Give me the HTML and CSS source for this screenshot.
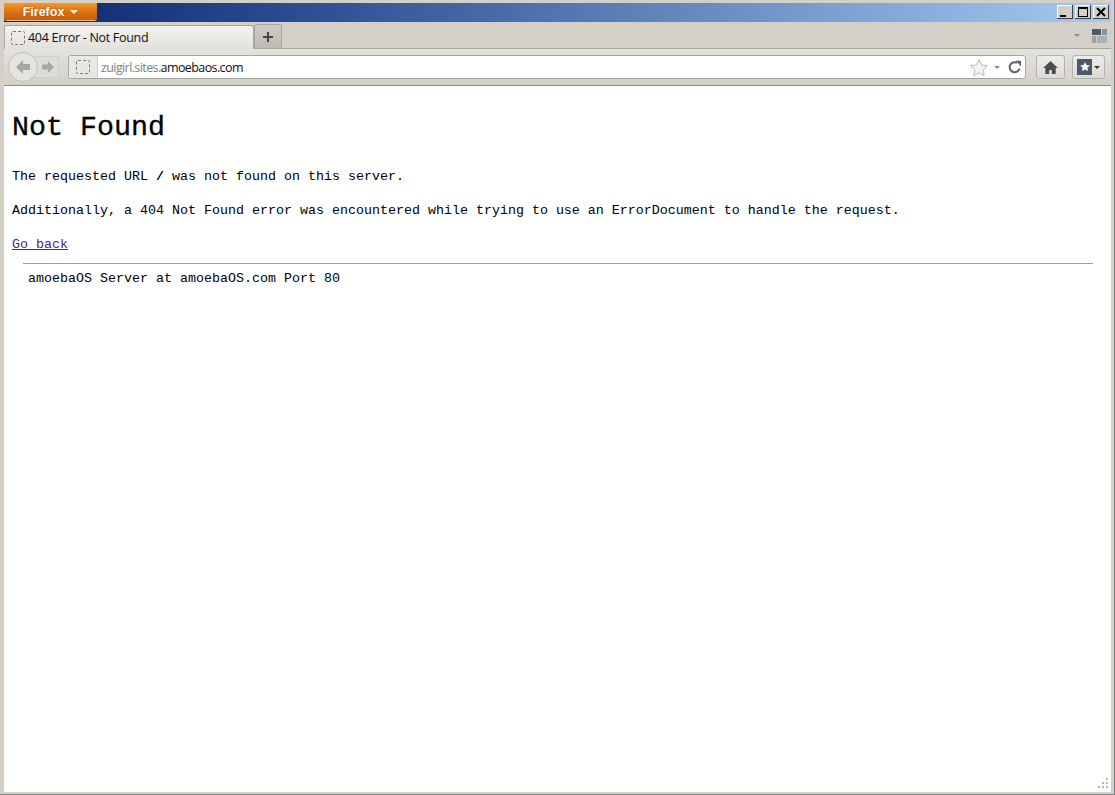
FILE: index.html
```html
<!DOCTYPE html>
<html lang="en">
<head>
    <meta charset="UTF-8">
    <title>404 Error - Not Found</title>
    <link rel="stylesheet" href="styles.css">
</head>
<body>
    <div class="window">
        <!-- Title bar -->
        <div class="titlebar">
            <div class="app-button">Firefox <span class="app-arrow"></span></div>
            <div class="win-controls">
                <div class="win-btn"><svg width="16" height="14" viewBox="0 0 16 14"><path d="M3 10h6v2H3z" fill="#000"/></svg></div>
                <div class="win-btn"><svg width="16" height="14" viewBox="0 0 16 14"><path d="M3 2h10v10H3zM4 4v7h8V4z" fill="#000" fill-rule="evenodd"/></svg></div>
                <div class="win-btn"><svg width="16" height="14" viewBox="0 0 16 14"><path d="M4 3l8 8M12 3l-8 8" stroke="#000" stroke-width="2" fill="none"/></svg></div>
            </div>
        </div>

        <!-- Tabs -->
        <div class="tabbar">
            <div class="tab">
                <span class="favicon"></span>
                <span class="tab-title">404 Error - Not Found</span>
            </div>
            <div class="new-tab">
                <svg width="12" height="12" viewBox="0 0 12 12"><path d="M6 1v10M1 6h10" stroke="#444" stroke-width="2"/></svg>
            </div>
            <div class="tabbar-right">
                <span class="small-arrow"></span>
                <svg class="groups-icon" width="15" height="15" viewBox="0 0 15 15">
                    <path d="M0 1h9v6H0z" fill="#4f5a66"/>
                    <path d="M10 1h5v6h-5z" fill="#8b949c"/>
                    <path d="M0 8h4v7H0z" fill="#9aa3aa"/>
                    <path d="M5 8h10v7H5z" fill="#a9b1b7"/>
                </svg>
            </div>
        </div>

        <!-- Navigation toolbar -->
        <div class="navbar">
            <div class="nav-buttons">
                <div class="back-btn">
                    <svg width="18" height="16" viewBox="0 0 18 16"><path d="M9 1L2 8l7 7v-4h7V5H9z" fill="#a4a6a6"/></svg>
                </div>
                <div class="forward-btn">
                    <svg width="14" height="14" viewBox="0 0 14 14"><path d="M7 1l6 6-6 6v-3.500H1v-5h6z" fill="#a6a8a6"/></svg>
                </div>
            </div>
            <div class="urlbar">
                <div class="identity"><span class="favicon"></span></div>
                <div class="url"><span class="url-dim">zuigirl.sites.</span>amoebaos.com</div>
                <svg class="star" width="20" height="19" viewBox="0 0 20 19"><path d="M10 1.500l2.600 5.400 5.900.8-4.300 4.100 1 5.900L10 14.900l-5.200 2.800 1-5.900L1.500 7.700l5.900-.8z" fill="#f2f2f0" stroke="#bdbdb8"/></svg>
                <span class="small-arrow"></span>
                <svg class="reload" width="14" height="14" viewBox="0 0 14 14"><path d="M11.500 8.500A5 5 0 1 1 9 2.800" fill="none" stroke="#5c6466" stroke-width="2"/><path d="M7.500 0.500L13 1v5.500z" fill="#5c6466"/></svg>
            </div>
            <div class="tool-btn home-btn">
                <svg width="15" height="13" viewBox="0 0 17 15"><path d="M8.500 0L0 8h2.500v7h4.500v-4.500h3V15h4.500V8H17z" fill="#474f52"/></svg>
            </div>
            <div class="tool-btn bookmarks-btn">
                <svg width="15" height="16" viewBox="0 0 15 16"><path d="M0 0h15v16H0z" fill="#4a5a6a"/><path d="M8 3l1.500 3 3.400.4-2.500 2.300.7 3.300L8 10.400 4.900 12l.7-3.300L3.100 6.400 6.500 6z" fill="#f4f6f8"/></svg>
                <span class="small-arrow dark"></span>
            </div>
        </div>

        <!-- Page content -->
        <div class="content">
            <h1>Not Found</h1>
            <p>The requested URL <strong>/</strong> was not found on this server.</p>
            <p>Additionally, a 404 Not Found error was encountered while trying to use an ErrorDocument to handle the request.</p>
            <p class="last"><a href="#">Go back</a></p>
            <hr>
            <address>amoebaOS Server at amoebaOS.com Port 80</address>
            <div class="grip">
                <svg width="12" height="12" viewBox="0 0 12 12"><path d="M9 1h2v2H9zM5 5h2v2H5zM9 5h2v2H9zM1 9h2v2H1zM5 9h2v2H5zM9 9h2v2H9z" fill="#b5b5b0"/></svg>
            </div>
        </div>
    </div>
</body>
</html>
```

FILE: styles.css
```css
html, body {
    margin: 0;
    padding: 0;
}
body {
    width: 1115px;
    height: 795px;
    overflow: hidden;
    background-color: #d4d0c8;
}
.window {
    display: flex;
    flex-direction: column;
    height: 795px;
    box-sizing: border-box;
    padding: 3px 3px 2px 4px;
    border-right: 1px solid #808080;
    border-bottom: 1px solid #808080;
    font-family: 'Open Sans', 'Liberation Sans', sans-serif;
}
.titlebar {
    display: flex;
    justify-content: space-between;
    height: 19px;
    flex: none;
    background: linear-gradient(to right, #0a246a, #2f5396 30%, #a6caf0);
}
.app-button {
    display: flex;
    align-items: center;
    justify-content: center;
    gap: 6px;
    width: 93px;
    height: 17px;
    box-sizing: border-box;
    background: linear-gradient(to bottom, #f29a2e, #d96f10 55%, #c4600a);
    border-radius: 0 0 3px 3px;
    box-shadow: 0 1px 0 #e9b98a;
    color: #fff;
    font-family: 'Liberation Sans', sans-serif;
    font-size: 12.500px;
    font-weight: bold;
    text-shadow: 0 0 2px #a04c00;
}
.app-arrow {
    width: 0;
    height: 0;
    border-left: 4px solid transparent;
    border-right: 4px solid transparent;
    border-top: 4px solid #fff2cf;
}
.win-controls {
    display: flex;
    gap: 2px;
    padding: 2px 2px 0 0;
}
.win-btn {
    width: 16px;
    height: 14px;
    background-color: #d4d0c8;
    box-shadow: inset -1px -1px 0 #404040, inset 1px 1px 0 #fff;
}
.win-btn svg {
    display: block;
}
.tabbar {
    display: flex;
    align-items: flex-end;
    height: 27px;
    flex: none;
    background-color: #d4d0c8;
    border-bottom: 1px solid #a8a69f;
    box-sizing: border-box;
}
.tab {
    display: flex;
    align-items: center;
    gap: 3px;
    width: 250px;
    height: 24px;
    box-sizing: border-box;
    margin-bottom: -1px;
    padding-left: 6px;
    background: linear-gradient(to bottom, #f3f2ef, #e3e1dc);
    border: 1px solid #a8a69f;
    border-bottom: none;
    border-radius: 3px 3px 0 0;
    font-size: 12.500px;
    letter-spacing: -0.3px;
    color: #111;
}
.favicon {
    display: block;
    width: 12px;
    height: 12px;
    border: 1px dashed #777;
    border-radius: 2px;
}
.new-tab {
    display: flex;
    align-items: center;
    justify-content: center;
    width: 28px;
    height: 24px;
    box-sizing: border-box;
    background: linear-gradient(to bottom, #cfccc5, #bcb9b2);
    border: 1px solid #a8a69f;
    border-bottom: none;
    border-radius: 3px 3px 0 0;
}
.tabbar-right {
    display: flex;
    align-items: center;
    gap: 12px;
    margin-left: auto;
    height: 25px;
    padding-right: 4px;
}
.groups-icon {
    display: block;
}
.small-arrow {
    width: 0;
    height: 0;
    border-left: 3px solid transparent;
    border-right: 3px solid transparent;
    border-top: 3px solid #8d8d88;
}
.small-arrow.dark {
    border-top-color: #333;
}
.navbar {
    display: flex;
    align-items: center;
    height: 37px;
    flex: none;
    box-sizing: border-box;
    padding: 0 5px 0 4px;
    background: linear-gradient(to bottom, #e4e2dd, #d4d0c8);
    border-bottom: 1px solid #8f8d87;
}
.nav-buttons {
    display: flex;
    align-items: center;
    width: 60px;
    flex: none;
    position: relative;
}
.back-btn {
    display: flex;
    align-items: center;
    justify-content: center;
    width: 28px;
    height: 28px;
    border: 1px solid #c0beb8;
    border-radius: 50%;
    background-color: #e6e4df;
    position: relative;
}
.forward-btn {
    display: flex;
    align-items: center;
    justify-content: center;
    width: 24px;
    height: 22px;
    margin-left: -3px;
    padding-left: 3px;
    box-sizing: border-box;
    border: 1px solid #d0cec8;
    border-left: none;
    border-radius: 0 3px 3px 0;
    background-color: #dfddd8;
}
.urlbar {
    display: flex;
    align-items: center;
    width: 958px;
    height: 24px;
    flex: none;
    box-sizing: border-box;
    background-color: #fff;
    border: 1px solid #a5a39d;
    border-radius: 3px;
}
.identity {
    display: flex;
    align-items: center;
    justify-content: center;
    width: 28px;
    height: 100%;
    flex: none;
    background-color: #e9e7e3;
    border-right: 1px solid #cfcdc8;
    border-radius: 3px 0 0 3px;
}
.url {
    flex: 1;
    padding-left: 3px;
    font-size: 12.500px;
    letter-spacing: -0.6px;
    color: #111;
}
.url-dim {
    color: #7f7f7f;
}
.star {
    display: block;
    margin-right: 5px;
}
.reload {
    display: block;
    margin: 0 3px 0 8px;
}
.tool-btn {
    display: flex;
    align-items: center;
    justify-content: center;
    gap: 2px;
    height: 24px;
    flex: none;
    box-sizing: border-box;
    border: 1px solid #b4b2ac;
    border-radius: 3px;
    background: linear-gradient(to bottom, #eeece8, #dcdad5);
}
.home-btn {
    width: 29px;
    margin-left: 10px;
}
.bookmarks-btn {
    width: 33px;
    margin-left: 7px;
}
.content {
    flex: 1;
    position: relative;
    background-color: #fff;
    padding: 8px;
    font-family: 'Liberation Mono', monospace;
    font-size: 13.330px;
    line-height: 18px;
    color: #000;
}
h1 {
    margin: 18px 0 24px;
    font-size: 28.330px;
    line-height: 32px;
    font-weight: normal;
    -webkit-text-stroke: 0.3px #000;
}
p {
    margin: 0 0 16px;
}
p.last {
    margin-bottom: 9px;
}
a {
    color: #551a8b;
}
hr {
    margin: 0 0 6px 11px;
    width: calc(100% - 21px);
    box-sizing: border-box;
    border: none;
    border-top: 1px solid #a0a0a0;
}
address {
    font-style: normal;
    padding-left: 16px;
}
.grip {
    position: absolute;
    right: 2px;
    bottom: 3px;
    line-height: 0;
}
```
